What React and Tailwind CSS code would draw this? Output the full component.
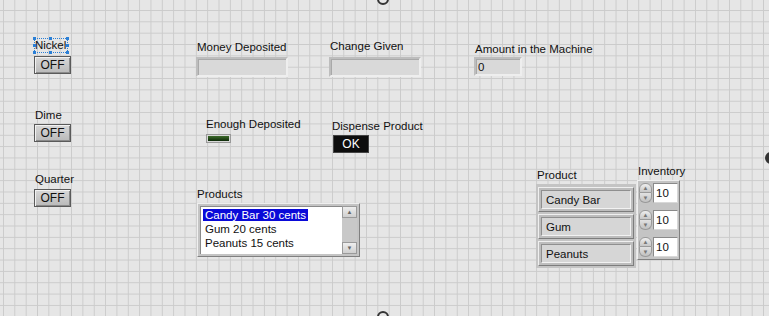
const font = { fontFamily: '"Liberation Sans", Arial, sans-serif' };

// a control on the front panel: label above, control below, placed at its panel spot
const Control = ({ x, y, label, gap = 2, children }) => (
  <div className="absolute flex flex-col items-start" style={{ left: x, top: y, gap }}>
    {label && <div className="text-[11.5px] leading-[14px] text-[#111] whitespace-nowrap pl-[1px]">{label}</div>}
    {children}
  </div>
);

const Bool = () => (
  <div className="w-[37px] h-[18px] flex items-center justify-center text-[12px] text-[#111] bg-[linear-gradient(#d8d8d8,#b9b9b9)] border border-[#5a5a5a] shadow-[inset_1px_1px_0_#f2f2f2,inset_-1px_-1px_0_#8a8a8a]">
    OFF
  </div>
);

const Readout = ({ w, h = 20, children }) => (
  <div
    className="bg-[#d9d9d9] border-2 border-t-[#bdbdbd] border-l-[#bdbdbd] border-b-[#eeeeee] border-r-[#eeeeee] shadow-[inset_1px_1px_0_#a9a9a9] text-[11.5px] leading-[14px] text-[#111] px-[2px] flex items-center"
    style={{ width: w, height: h }}
  >
    {children}
  </div>
);

const StrItem = ({ children }) => (
  <div className="w-[96px] h-[25px] bg-[#bdbdbd] border border-t-[#efefef] border-l-[#efefef] border-b-[#7d7d7d] border-r-[#7d7d7d] p-[2px]">
    <div className="w-full h-full bg-[#d6d6d6] border border-t-[#8f8f8f] border-l-[#8f8f8f] border-b-[#f2f2f2] border-r-[#f2f2f2] text-[11.5px] leading-[14px] text-[#111] px-[4px] flex items-center">
      {children}
    </div>
  </div>
);

const Num = () => (
  <div className="flex items-center gap-[1px]">
    <div className="w-[13px] h-[20px] flex flex-col">
      <div className="h-[10px] rounded-t-[6px] bg-[linear-gradient(#efefef,#c6c6c6)] border border-[#9a9a9a] flex items-center justify-center text-[6px] leading-none text-[#777]">▲</div>
      <div className="h-[10px] rounded-b-[6px] bg-[linear-gradient(#e2e2e2,#c0c0c0)] border border-t-0 border-[#9a9a9a] flex items-center justify-center text-[6px] leading-none text-[#777]">▼</div>
    </div>
    <div className="w-[25px] h-[20px] bg-white border border-t-[#8a8a8a] border-l-[#8a8a8a] border-b-[#d8d8d8] border-r-[#d8d8d8] text-[11.5px] leading-[14px] text-[#111] px-[2px] flex items-center">
      10
    </div>
  </div>
);

const Handle = ({ className }) => <div className={`absolute w-[3px] h-[3px] bg-[#2a7fd6] ${className}`} />;

export default function App() {
  return (
    <div
      className="relative w-[769px] h-[316px] overflow-hidden bg-[#e6e6e6] bg-[linear-gradient(to_right,#cbcbcb_1px,transparent_1px),linear-gradient(to_bottom,#cbcbcb_1px,transparent_1px)] bg-[size:11.35px_11.35px] bg-[position:3px_10px]"
      style={font}
    >
      {/* window edge markers */}
      <div className="absolute left-[377px] top-[-7px] w-[12px] h-[12px] rounded-full border-2 border-[#333]" />
      <div className="absolute left-[377px] top-[311px] w-[12px] h-[12px] rounded-full border-2 border-[#333]" />
      <div className="absolute left-[765px] top-[152px] w-[12px] h-[12px] rounded-full bg-[#333]" />

      {/* Nickel, label selected */}
      <div className="absolute left-[34px] top-[38px] flex flex-col gap-[3px]">
        <div className="relative w-[34px] h-[15px] border border-dotted border-[#2a7fd6]">
          <div className="w-[31px] overflow-hidden text-[11.5px] leading-[13px] text-[#111] whitespace-nowrap">Nickel</div>
          <Handle className="-left-[2px] -top-[2px]" />
          <Handle className="left-[14px] -top-[2px]" />
          <Handle className="-right-[2px] -top-[2px]" />
          <Handle className="-left-[2px] top-[5px]" />
          <Handle className="-right-[2px] top-[5px]" />
          <Handle className="-left-[2px] -bottom-[2px]" />
          <Handle className="left-[14px] -bottom-[2px]" />
          <Handle className="-right-[2px] -bottom-[2px]" />
        </div>
        <Bool />
      </div>

      <Control x={34} y={108} label="Dime"><Bool /></Control>
      <Control x={34} y={172} label="Quarter" gap={3}><Bool /></Control>

      <Control x={196} y={40} label="Money Deposited" gap={3}><Readout w={92} /></Control>
      <Control x={329} y={39} label="Change Given" gap={4}><Readout w={92} /></Control>
      <Control x={474} y={42} label="Amount in the Machine" gap={1}><Readout w={48} h={19}>0</Readout></Control>

      <Control x={205} y={117} label="Enough Deposited" gap={3}>
        <div className="ml-[1px] w-[25px] h-[9px] bg-[#d8d8d8] border border-[#999] p-[1px]">
          <div className="w-full h-full bg-[linear-gradient(#3c6b2a,#0f2a0a)]" />
        </div>
      </Control>

      <Control x={331} y={119} label="Dispense Product" gap={2}>
        <div className="ml-[2px] w-[36px] h-[18px] bg-[#0d0d0d] border border-[#444] text-white text-[12px] flex items-center justify-center">
          OK
        </div>
      </Control>

      <Control x={196} y={187} label="Products" gap={2}>
        <div className="ml-[1px] w-[163px] h-[54px] bg-[#c4c4c4] border border-t-[#efefef] border-l-[#efefef] border-b-[#808080] border-r-[#808080] p-[2px] flex">
          <div className="flex-1 bg-white border border-t-[#8a8a8a] border-l-[#8a8a8a] border-b-0 border-r-0 text-[11.5px] leading-[14px] text-[#111] pt-[1px] pl-[2px]">
            <div><span className="bg-[#0a0ad8] text-white px-[2px]">Candy Bar 30 cents</span></div>
            <div className="px-[2px]">Gum 20 cents</div>
            <div className="px-[2px]">Peanuts 15 cents</div>
          </div>
          <div className="w-[15px] flex flex-col bg-[#c8c8c8]">
            <div className="h-[12px] bg-[linear-gradient(#eeeeee,#cfcfcf)] border border-[#9a9a9a] flex items-center justify-center text-[6px] text-[#666]">▲</div>
            <div className="flex-1" />
            <div className="h-[12px] bg-[linear-gradient(#eeeeee,#cfcfcf)] border border-[#9a9a9a] flex items-center justify-center text-[6px] text-[#666]">▼</div>
          </div>
        </div>
      </Control>

      <Control x={536} y={168} label="Product" gap={2}>
        <div className="bg-[#c4c4c4] p-[2px] pt-[3px] flex flex-col gap-[2px]">
          <StrItem>Candy Bar</StrItem>
          <StrItem>Gum</StrItem>
          <StrItem>Peanuts</StrItem>
        </div>
      </Control>

      <Control x={637} y={164} label="Inventory" gap={2}>
        <div className="bg-[#c4c4c4] border border-t-[#efefef] border-l-[#efefef] border-b-[#808080] border-r-[#808080] px-[1px] py-[2px] flex flex-col gap-[7px]">
          <Num />
          <Num />
          <Num />
        </div>
      </Control>
    </div>
  );
}
